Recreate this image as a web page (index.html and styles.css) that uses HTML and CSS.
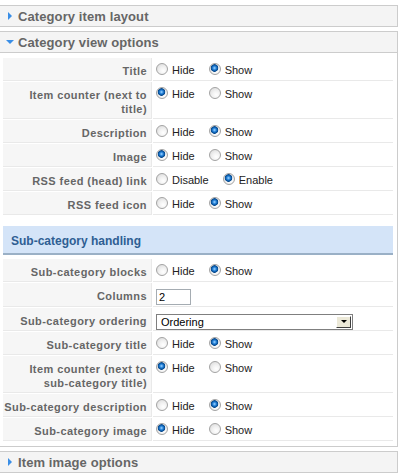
FILE: index.html
```html
<!DOCTYPE html>
<html>
<head>
<meta charset="utf-8">
<link rel="stylesheet" href="styles.css">
</head>
<body>
<div class="pane">
  <div class="panel">
    <h3 class="panel-title"><span class="arrow arrow-right"></span>Category item layout</h3>
  </div>
  <div class="panel">
    <h3 class="panel-title open"><span class="arrow arrow-down"></span>Category view options</h3>
    <div class="panel-content">
      <table class="paramlist first">
        <tr><td class="key">Title</td><td class="value"><div class="opts"><input type="radio" name="r1"><label>Hide</label><input type="radio" name="r1" checked><label>Show</label></div></td></tr>
        <tr><td class="key">Item counter (next to title)</td><td class="value"><div class="opts"><input type="radio" name="r2" checked><label>Hide</label><input type="radio" name="r2"><label>Show</label></div></td></tr>
        <tr><td class="key">Description</td><td class="value"><div class="opts"><input type="radio" name="r3"><label>Hide</label><input type="radio" name="r3" checked><label>Show</label></div></td></tr>
        <tr><td class="key">Image</td><td class="value"><div class="opts"><input type="radio" name="r4" checked><label>Hide</label><input type="radio" name="r4"><label>Show</label></div></td></tr>
        <tr><td class="key">RSS feed (head) link</td><td class="value"><div class="opts"><input type="radio" name="r5"><label>Disable</label><input type="radio" name="r5" checked><label>Enable</label></div></td></tr>
        <tr><td class="key">RSS feed icon</td><td class="value"><div class="opts"><input type="radio" name="r6"><label>Hide</label><input type="radio" name="r6" checked><label>Show</label></div></td></tr>
      </table>
      <div class="subhead">Sub-category handling</div>
      <table class="paramlist">
        <tr><td class="key">Sub-category blocks</td><td class="value"><div class="opts"><input type="radio" name="s1"><label>Hide</label><input type="radio" name="s1" checked><label>Show</label></div></td></tr>
        <tr><td class="key">Columns</td><td class="value"><div class="opts tall"><span class="textbox">2</span></div></td></tr>
        <tr><td class="key">Sub-category ordering</td><td class="value"><div class="opts"><span class="select"><span class="select-text">Ordering</span><span class="select-btn"><span class="select-tri"></span></span></span></div></td></tr>
        <tr><td class="key">Sub-category title</td><td class="value"><div class="opts"><input type="radio" name="s2"><label>Hide</label><input type="radio" name="s2" checked><label>Show</label></div></td></tr>
        <tr><td class="key">Item counter (next to sub-category title)</td><td class="value"><div class="opts"><input type="radio" name="s3" checked><label>Hide</label><input type="radio" name="s3"><label>Show</label></div></td></tr>
        <tr><td class="key">Sub-category description</td><td class="value"><div class="opts"><input type="radio" name="s4"><label>Hide</label><input type="radio" name="s4" checked><label>Show</label></div></td></tr>
        <tr><td class="key">Sub-category image</td><td class="value"><div class="opts"><input type="radio" name="s5" checked><label>Hide</label><input type="radio" name="s5"><label>Show</label></div></td></tr>
      </table>
    </div>
  </div>
  <div class="panel">
    <h3 class="panel-title"><span class="arrow arrow-right"></span>Item image options</h3>
  </div>
</div>
</body>
</html>
```
FILE: styles.css
```css
html, body {
  margin: 0;
  padding: 0;
  background: #fff;
}
body {
  font-family: "Liberation Sans", Arial, sans-serif;
  font-size: 11px;
  color: #333;
}
.pane {
  padding-top: 5px;
  margin-left: -1px;
  width: 399px;
}
.panel {
  border: 1px solid #ccc;
  margin-bottom: 4px;
}
.panel-title {
  margin: 0;
  height: 20px;
  background: #f4f4f4;
  display: flex;
  align-items: center;
  font-size: 13px;
  font-weight: bold;
  letter-spacing: 0.1px;
  color: #666;
  padding-left: 18px;
  position: relative;
}
.panel-title.open {
  border-bottom: 1px solid #ccc;
}
.arrow {
  position: absolute;
  width: 0;
  height: 0;
}
.arrow-right {
  left: 8px;
  top: 6px;
  border-top: 4px solid transparent;
  border-bottom: 4px solid transparent;
  border-left: 4px solid #3a8ee6;
}
.arrow-down {
  left: 6px;
  top: 8px;
  border-left: 4px solid transparent;
  border-right: 4px solid transparent;
  border-top: 4px solid #3a8ee6;
}
.panel-content {
  padding: 0 3px 4px 2px;
}
.paramlist {
  width: 100%;
  border-collapse: separate;
  border-spacing: 1px;
}
.paramlist.first {
  margin-top: 4px;
}
.paramlist td {
  padding: 0;
  border-bottom: 1px solid #e9e9e9;
}
.key {
  width: 144px;
  background: #f6f6f6;
  border-right: 1px solid #e9e9e9;
  color: #666;
  font-weight: bold;
  letter-spacing: 0.42px;
  text-align: right;
  padding: 6px 4px 2px 0 !important;
  line-height: 14px;
  vertical-align: top;
}
.value {
  padding: 0 0 0 3px !important;
  white-space: nowrap;
  vertical-align: top;
}
.opts {
  height: 22px;
  display: flex;
  align-items: center;
}
.opts.tall {
  height: 23px;
}
.opts input[type="radio"] {
  -webkit-appearance: none;
  appearance: none;
  flex: none;
  width: 12px;
  height: 12px;
  margin: 0 4px 0 0;
  border-radius: 50%;
  border: 1px solid #a3a3a3;
  background: radial-gradient(circle at 62% 68%, #ffffff 0%, #f2f2f2 40%, #d6d6d6 100%);
  box-sizing: border-box;
}
.opts input[type="radio"]:checked {
  background:
    radial-gradient(circle at 45% 40%, #a8d8ff 0px, #2f8be0 1.6px, #0b5aa8 2.8px, #0a4a8c 3.5px, rgba(255,255,255,0) 4.1px),
    radial-gradient(circle at 62% 68%, #ffffff 0%, #f2f2f2 40%, #d6d6d6 100%);
}
.opts label {
  color: #222;
  margin-right: 14px;
  padding-top: 2px;
}
.subhead {
  margin: 10px 1px 3px 1px;
  height: 24px;
  padding-top: 3px;
  background: #d4e4f8;
  border-bottom: 2px solid #9ab0c6;
  color: #2e5e93;
  font-size: 12px;
  font-weight: bold;
  display: flex;
  align-items: center;
  padding-left: 8px;
}
.textbox {
  box-sizing: border-box;
  width: 35px;
  height: 16px;
  margin-top: 5px;
  border: 1px solid #a5acb2;
  padding-left: 2px;
  line-height: 14px;
  color: #000;
}
.select {
  display: flex;
  box-sizing: border-box;
  width: 197px;
  height: 16px;
  margin-top: 5px;
  border: 1px solid #7f7f7f;
}
.select-text {
  flex: 1;
  padding-left: 4px;
  line-height: 14px;
  color: #000;
}
.select-btn {
  width: 15px;
  margin: 1px;
  background: #ece9d8;
  border: 1px solid;
  border-color: #fff #404040 #404040 #fff;
  box-sizing: border-box;
  display: flex;
  align-items: center;
  justify-content: center;
}
.select-tri {
  width: 0;
  height: 0;
  border-left: 3px solid transparent;
  border-right: 3px solid transparent;
  border-top: 3px solid #000;
}
```
